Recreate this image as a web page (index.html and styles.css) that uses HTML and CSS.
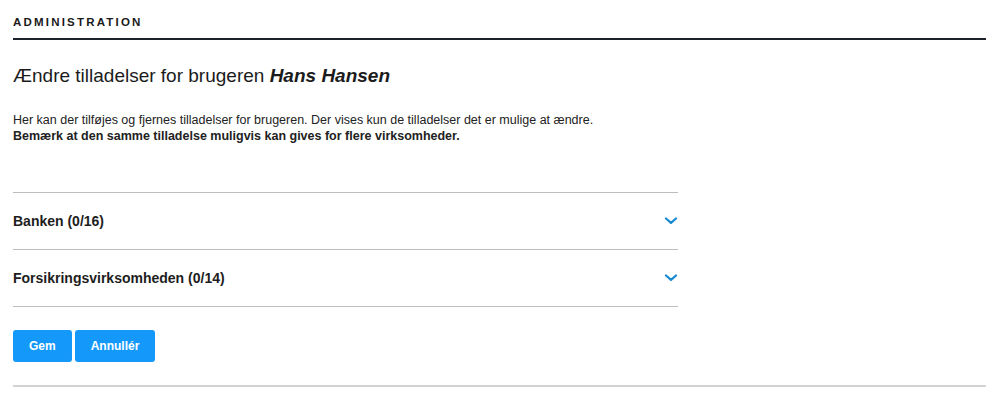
FILE: index.html
```html
<!DOCTYPE html>
<html lang="da">
<head>
    <meta charset="UTF-8">
    <meta name="viewport" content="width=device-width, initial-scale=1.0">
    <title>Administration</title>
    <link rel="stylesheet" href="styles.css">
</head>
<body>

    <div class="page">

        <header class="top">
            <span class="top-label">ADMINISTRATION</span>
        </header>

        <h1 class="title">Ændre tilladelser for brugeren <em>Hans Hansen</em></h1>

        <p class="intro">
            Her kan der tilføjes og fjernes tilladelser for brugeren. Der vises kun de tilladelser det er mulige at ændre.<br>
            <strong>Bemærk at den samme tilladelse muligvis kan gives for flere virksomheder.</strong>
        </p>

        <div class="accordion">
            <div class="acc-row">
                <span class="acc-title">Banken (0/16)</span>
                <svg class="chevron" width="14" height="8" viewBox="0 0 14 8"><path d="M2 1.5 L7 5.8 L12 1.5" fill="none" stroke="#1689d0" stroke-width="2.2" stroke-linecap="round" stroke-linejoin="round"/></svg>
            </div>
            <div class="acc-row">
                <span class="acc-title">Forsikringsvirksomheden (0/14)</span>
                <svg class="chevron" width="14" height="8" viewBox="0 0 14 8"><path d="M2 1.5 L7 5.8 L12 1.5" fill="none" stroke="#1689d0" stroke-width="2.2" stroke-linecap="round" stroke-linejoin="round"/></svg>
            </div>
        </div>

        <div class="actions">
            <button class="btn">Gem</button>
            <button class="btn">Annullér</button>
        </div>

        <hr class="bottom-line">

    </div>

</body>
</html>
```

FILE: styles.css
```css
body {
    font-family: 'Liberation Sans', Arial, sans-serif;
    margin: 0;
    padding: 0;
    background-color: #fff;
    color: #1b1b1b;
}

.page {
    padding: 0 14px 0 13px;
}

.top {
    padding-top: 12px;
    height: 26px;
    border-bottom: 2px solid #1c2229;
}

.top-label {
    font-size: 11.5px;
    font-weight: bold;
    letter-spacing: 2.2px;
    color: #1a1a1a;
}

.title {
    font-size: 19px;
    font-weight: normal;
    margin: 25px 0 0 0;
    line-height: 22px;
}

.title em {
    font-weight: bold;
}

.intro {
    font-size: 12.5px;
    line-height: 16px;
    margin: 25px 0 0 0;
    color: #222;
}

.accordion {
    width: 665px;
    margin-top: 48px;
    border-top: 1px solid #bdbdbd;
}

.acc-row {
    height: 56px;
    border-bottom: 1px solid #bdbdbd;
    display: flex;
    align-items: center;
    justify-content: space-between;
    cursor: pointer;
}

.acc-title {
    font-size: 14px;
    font-weight: bold;
    color: #1d1d1d;
}

.actions {
    display: flex;
    gap: 3px;
    margin-top: 23px;
}

.btn {
    font-family: 'Liberation Sans', Arial, sans-serif;
    font-size: 12px;
    font-weight: bold;
    color: #fff;
    background-color: #1499fb;
    border: none;
    border-radius: 3px;
    height: 32px;
    padding: 0 16px;
    cursor: pointer;
}

.bottom-line {
    border: none;
    border-top: 2px solid #d2d2d2;
    margin: 23px 0 0 0;
}
```
